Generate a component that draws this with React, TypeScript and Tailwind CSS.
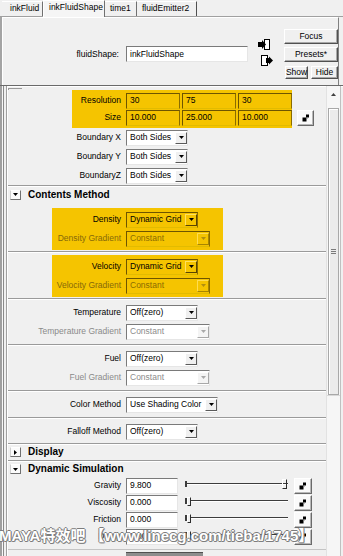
import React from "react";

type Tone = "white" | "yellow";

function Tri({ dir = "down", color = "#000" }: { dir?: "down" | "right" | "up"; color?: string }) {
  if (dir === "down")
    return (
      <svg width="5" height="3" viewBox="0 0 5 3">
        <polygon points="0,0 5,0 2.5,3" fill={color} />
      </svg>
    );
  if (dir === "up")
    return (
      <svg width="5" height="3" viewBox="0 0 5 3">
        <polygon points="0,3 5,3 2.5,0" fill={color} />
      </svg>
    );
  return (
    <svg width="3" height="5" viewBox="0 0 3 5">
      <polygon points="0,0 3,2.5 0,5" fill={color} />
    </svg>
  );
}

function Checker() {
  return (
    <svg width="8" height="8" viewBox="0 0 8 8">
      <rect x="4" y="0.5" width="3" height="3" fill="#000" />
      <rect x="0.5" y="3.5" width="4" height="4" fill="#000" />
      <rect x="4.5" y="4" width="1" height="1" fill="#888" />
    </svg>
  );
}

function MapBtn({ cls }: { cls: string }) {
  return (
    <div
      className={`${cls} shrink-0 flex items-center justify-center bg-[#fafafa] border border-t-white border-l-white border-b-[#6a6a6a] border-r-[#6a6a6a] shadow-[inset_-1px_-1px_0_#b8b8b8]`}
    >
      <Checker />
    </div>
  );
}

function NumField({ v, cls, tone = "white" }: { v: string; cls: string; tone?: Tone }) {
  const t =
    tone === "yellow"
      ? "bg-[#f5c400] border-t-[#6e5500] border-l-[#6e5500] border-b-[#e2bb00] border-r-[#8a6c00]"
      : "bg-white border-t-[#7a7a7a] border-l-[#7a7a7a] border-b-[#e6e6e6] border-r-[#e6e6e6]";
  return (
    <div className={`${cls} shrink-0 h-[16px] flex items-center pl-[3px] border ${t} whitespace-nowrap overflow-hidden`}>
      {v}
    </div>
  );
}

function Drop({
  text,
  cls,
  tone = "white",
  disabled = false,
}: {
  text: string;
  cls: string;
  tone?: Tone;
  disabled?: boolean;
}) {
  const wrap =
    tone === "yellow"
      ? "bg-[#f5c400] border-t-[#6e5500] border-l-[#6e5500] border-b-[#e2bb00] border-r-[#8a6c00]"
      : "bg-white border-t-[#7a7a7a] border-l-[#7a7a7a] border-b-[#e6e6e6] border-r-[#e6e6e6]";
  const btn =
    tone === "yellow"
      ? disabled
        ? "bg-[#f5c400] border-t-[#ffdc50] border-l-[#ffdc50] border-b-[#a88600] border-r-[#a88600]"
        : "bg-[#f5c400] border-t-[#ffe060] border-l-[#ffe060] border-b-[#5a4500] border-r-[#5a4500]"
      : disabled
      ? "bg-[#f4f4f4] border-t-white border-l-white border-b-[#a8a8a8] border-r-[#a8a8a8]"
      : "bg-[#f0f0f0] border-t-white border-l-white border-b-[#5a5a5a] border-r-[#5a5a5a]";
  const txt = disabled ? (tone === "yellow" ? "text-[#8a6c00]" : "text-[#8c8c8c]") : "text-black";
  const triColor = disabled ? (tone === "yellow" ? "#b08e10" : "#a8a8a8") : "#000";
  return (
    <div className={`${cls} shrink-0 h-[16px] flex items-center border ${wrap}`}>
      <div className={`flex-1 pl-[3px] whitespace-nowrap overflow-hidden ${txt}`}>{text}</div>
      <div className={`w-[12px] h-[12px] shrink-0 flex items-center justify-center border ${btn}`}>
        <Tri color={triColor} />
      </div>
    </div>
  );
}

function Row({
  label,
  labelCls,
  h = "h-[19px]",
  muted,
  children,
}: {
  label: string;
  labelCls: string;
  h?: string;
  muted?: string;
  children: React.ReactNode;
}) {
  return (
    <div className={`${h} flex items-center gap-[5px]`}>
      <div className={`${labelCls} shrink-0 text-right whitespace-nowrap ${muted ?? "text-black"}`}>{label}</div>
      {children}
    </div>
  );
}

function Header({ title, open, h = "h-[17px]" }: { title: string; open: boolean; h?: string }) {
  return (
    <div className={`${h} flex items-center border-t border-[#9a9a9a] shadow-[inset_0_1px_0_#ffffff]`}>
      <div className="ml-[2px] w-[11px] h-[10px] flex items-center justify-center bg-[#fbfbfb] border border-t-white border-l-[#d0d0d0] border-b-[#707070] border-r-[#707070]">
        <Tri dir={open ? "down" : "right"} />
      </div>
      <div className="ml-[7px] font-bold text-[10px] text-black">{title}</div>
    </div>
  );
}

function Slider({ pos }: { pos: "left" | "right" }) {
  return (
    <div className="relative shrink-0 w-[103px] h-[14px] ml-[2px]">
      <div className="absolute left-0 right-0 top-[4px] h-[2px] border-t border-[#3c3c3c] border-b border-b-white" />
      <div className="absolute left-0 top-[2px] w-[2px] h-[6px] bg-[#3c3c3c]" />
      {pos === "right" ? (
        <div className="absolute right-[1px] top-[0px] w-[5px] h-[10px] border-r border-b border-[#2c2c2c] border-l border-l-white border-t border-t-white" />
      ) : (
        <div className="absolute left-[2px] top-[1px] w-[4px] h-[9px] bg-[#f0f0f0] border-r border-b border-[#2c2c2c] border-l border-l-white border-t border-t-white" />
      )}
    </div>
  );
}

function IconIn() {
  return (
    <svg width="13" height="11" viewBox="0 0 13 11">
      <rect x="6.5" y="0.5" width="5" height="10" fill="#fff" stroke="#000" />
      <rect x="0" y="3" width="4" height="5" fill="#000" />
      <polygon points="4,1 8,5.5 4,10" fill="#000" />
    </svg>
  );
}

function IconOut() {
  return (
    <svg width="13" height="11" viewBox="0 0 13 11">
      <rect x="0.5" y="0.5" width="6" height="10" fill="#fff" stroke="#000" />
      <rect x="5" y="3" width="3" height="5" fill="#000" />
      <polygon points="8,1.5 12,5.5 8,9.5" fill="#000" />
    </svg>
  );
}

const raised =
  "flex items-center justify-center bg-[#f0f0f0] border border-t-white border-l-white border-b-[#505050] border-r-[#505050] shadow-[inset_-1px_-1px_0_#a8a8a8]";

function TabBar() {
  return (
    <div className="h-[17px] flex items-end pl-[2px] border-b border-[#a0a0a0] relative">
      <div className="h-[15px] w-[41px] pl-[8px] pb-[1px] flex items-center border-r border-[#707070] border-t border-t-white">
        inkFluid
      </div>
      <div className="h-[17px] w-[62px] pl-[5px] pb-[3px] flex items-center bg-[#f5f5f5] border-l border-l-white border-t border-t-white border-r border-[#707070] -mb-[1px] relative z-10">
        inkFluidShape
      </div>
      <div className="h-[15px] w-[32px] pl-[5px] pb-[1px] flex items-center border-r border-[#707070] border-t border-t-white">
        time1
      </div>
      <div className="h-[15px] w-[60px] pl-[5px] pb-[1px] flex items-center border-r border-[#505050] border-t border-t-white">
        fluidEmitter2
      </div>
    </div>
  );
}

function TopPanel() {
  return (
    <div className="h-[69px] flex border-b border-[#6a6a6a] shadow-[0_1px_0_#ffffff]">
      <div className="w-[3px] flex">
        <div className="w-[2px] bg-[#a4a4a4]" />
        <div className="w-[1px] bg-white" />
      </div>
      <div className="flex-1 flex items-start border-r border-[#808080] mr-[4px] border-t border-t-white">
        <div className="mt-[28px] flex items-center gap-[7px]">
          <div className="w-[116px] text-right">fluidShape:</div>
          <div className="w-[122px] h-[16px] flex items-center pl-[3px] bg-white border border-t-[#7a7a7a] border-l-[#7a7a7a] border-b-[#e6e6e6] border-r-[#e6e6e6]">
            inkFluidShape
          </div>
        </div>
        <div className="ml-[10px] mt-[21px] flex flex-col gap-[5px]">
          <IconIn />
          <div className="ml-[3px]">
            <IconOut />
          </div>
        </div>
        <div className="ml-[10px] mt-[11px] flex flex-col">
          <div className={`${raised} w-[54px] h-[15px]`}>Focus</div>
          <div className={`${raised} w-[54px] h-[15px] mt-[3px]`}>Presets*</div>
          <div className="flex mt-[4px] gap-[3px] ml-[1px]">
            <div className={`${raised} w-[23px] h-[13px]`}>Show</div>
            <div className={`${raised} w-[27px] h-[13px]`}>Hide</div>
          </div>
        </div>
      </div>
    </div>
  );
}

function LeftFrame() {
  return (
    <div className="w-[8px] shrink-0 flex">
      <div className="w-[2px] bg-[#a0a0a0]" />
      <div className="w-[1px] bg-[#f8f8f8]" />
      <div className="w-[1px] bg-[#8a8a8a]" />
      <div className="w-[2px] bg-[#f0f0f0]" />
      <div className="w-[1px] bg-[#a0a0a0]" />
      <div className="w-[1px] bg-white" />
    </div>
  );
}

function Scrollbar() {
  return (
    <div className="w-[14px] shrink-0 flex flex-col bg-[#f6f6f6] border-l border-[#e2e2e2]">
      <div className="h-[16px] shrink-0 flex items-center justify-center">
        <Tri dir="up" color="#404040" />
      </div>
      <div className="h-[6px] shrink-0" />
      <div className="h-[287px] shrink-0 mx-[1px] flex items-center justify-center bg-[#ebebeb] border border-[#a8a8a8] shadow-[inset_1px_1px_0_#ffffff]">
        <div className="flex flex-col gap-[1px]">
          <div className="w-[5px] h-[1px] bg-[#7a7a7a]" />
          <div className="w-[5px] h-[1px] bg-[#7a7a7a]" />
          <div className="w-[5px] h-[1px] bg-[#7a7a7a]" />
        </div>
      </div>
      <div className="flex-1 border-t border-[#d8d8d8]" />
    </div>
  );
}

const grp = "border-b border-[#9a9a9a] shadow-[0_1px_0_#ffffff]";
const yellowLabelMuted = "text-[#86690a]";
const grayMuted = "text-[#8a8a8a]";

function Content() {
  return (
    <div className="w-[318px] shrink-0 overflow-hidden">
      {/* remnant of previous section */}
      <div className="h-[4px] pt-[2px]">
        <div className="w-[14px] h-[2px] border-t border-l border-[#9a9a9a]" />
      </div>

      {/* Resolution / Size */}
      <div className="h-[38px] flex items-end">
        <div className="ml-[64px] w-[220px] py-[2px] bg-[#f5c400]">
          <Row label="Resolution" labelCls="w-[49px]" h="h-[17px]">
            <div className="flex gap-[2px]">
              <NumField v="30" cls="w-[54px]" tone="yellow" />
              <NumField v="75" cls="w-[54px]" tone="yellow" />
              <NumField v="30" cls="w-[54px]" tone="yellow" />
            </div>
          </Row>
          <Row label="Size" labelCls="w-[49px]" h="h-[17px]">
            <div className="flex gap-[2px]">
              <NumField v="10.000" cls="w-[54px]" tone="yellow" />
              <NumField v="25.000" cls="w-[54px]" tone="yellow" />
              <NumField v="10.000" cls="w-[54px]" tone="yellow" />
            </div>
          </Row>
        </div>
        <div className="ml-[5px] mb-[2px]">
          <MapBtn cls="w-[17px] h-[16px]" />
        </div>
      </div>

      <Row label="Boundary X" labelCls="w-[113px]">
        <Drop text="Both Sides" cls="w-[62px]" />
      </Row>
      <Row label="Boundary Y" labelCls="w-[113px]">
        <Drop text="Both Sides" cls="w-[62px]" />
      </Row>
      <Row label="BoundaryZ" labelCls="w-[113px]">
        <Drop text="Both Sides" cls="w-[62px]" />
      </Row>

      <Header title="Contents Method" open h="h-[18px]" />

      {/* Density */}
      <div className={`pt-[5px] pb-[1px] ${grp}`}>
        <div className="ml-[44px] w-[171px] py-[2px] bg-[#f5c400]">
          <Row label="Density" labelCls="w-[69px]">
            <Drop text="Dynamic Grid" cls="w-[72px]" tone="yellow" />
          </Row>
          <Row label="Density Gradient" labelCls="w-[69px]" muted={yellowLabelMuted}>
            <Drop text="Constant" cls="w-[84px]" tone="yellow" disabled />
          </Row>
        </div>
      </div>

      {/* Velocity */}
      <div className={`pt-[3px] pb-[1px] ${grp}`}>
        <div className="ml-[44px] w-[171px] py-[2px] bg-[#f5c400]">
          <Row label="Velocity" labelCls="w-[69px]">
            <Drop text="Dynamic Grid" cls="w-[72px]" tone="yellow" />
          </Row>
          <Row label="Velocity Gradient" labelCls="w-[69px]" muted={yellowLabelMuted}>
            <Drop text="Constant" cls="w-[84px]" tone="yellow" disabled />
          </Row>
        </div>
      </div>

      {/* Temperature */}
      <div className={`pt-[4px] pb-[3px] ${grp}`}>
        <Row label="Temperature" labelCls="w-[113px]">
          <Drop text="Off(zero)" cls="w-[72px]" />
        </Row>
        <Row label="Temperature Gradient" labelCls="w-[113px]" muted={grayMuted}>
          <Drop text="Constant" cls="w-[84px]" disabled />
        </Row>
      </div>

      {/* Fuel */}
      <div className={`pt-[4px] pb-[3px] ${grp}`}>
        <Row label="Fuel" labelCls="w-[113px]">
          <Drop text="Off(zero)" cls="w-[72px]" />
        </Row>
        <Row label="Fuel Gradient" labelCls="w-[113px]" muted={grayMuted}>
          <Drop text="Constant" cls="w-[84px]" disabled />
        </Row>
      </div>

      {/* Color Method */}
      <div className={`pt-[4px] pb-[3px] ${grp}`}>
        <Row label="Color Method" labelCls="w-[113px]">
          <Drop text="Use Shading Color" cls="w-[92px]" />
        </Row>
      </div>

      {/* Falloff */}
      <div className="pt-[4px] pb-[2px]">
        <Row label="Falloff Method" labelCls="w-[113px]">
          <Drop text="Off(zero)" cls="w-[72px]" />
        </Row>
      </div>

      <Header title="Display" open={false} />
      <Header title="Dynamic Simulation" open />

      {[
        { l: "Gravity", v: "9.800", p: "right" as const },
        { l: "Viscosity", v: "0.000", p: "left" as const },
        { l: "Friction", v: "0.000", p: "left" as const },
        { l: "Damp", v: "0.000", p: "left" as const },
      ].map((r) => (
        <Row key={r.l} label={r.l} labelCls="w-[113px]" h="h-[17px]">
          <NumField v={r.v} cls="w-[52px]" />
          <Slider pos={r.p} />
          <MapBtn cls="w-[18px] h-[16px] ml-[1px]" />
        </Row>
      ))}

      <div className="h-[5px] border-b border-[#c4c4c4]" />
      <div className="ml-[118px] mt-[2px] w-[77px] h-[10px] bg-[#8e8e8e] border-t border-[#505050]" />
    </div>
  );
}

export default function App() {
  return (
    <div className="w-[343px] h-[556px] overflow-hidden bg-[#f0f0f0] relative font-['Liberation_Sans',Arial,sans-serif] text-[8.5px] text-black leading-none select-none">
      <TabBar />
      <TopPanel />
      <div className="flex h-[470px]">
        <LeftFrame />
        <Content />
        <Scrollbar />
        <div className="w-[3px] shrink-0 border-l border-[#c0c0c0]" />
      </div>
      <div className="absolute left-[-1px] top-[528px] whitespace-nowrap text-[15px] font-bold text-white font-['Liberation_Sans','Noto_Sans_CJK_SC',sans-serif] [text-shadow:1px_0_#7c7c7c,-1px_0_#7c7c7c,0_1px_#7c7c7c,0_-1px_#7c7c7c,1px_1px_#9a9a9a]">
        MAYA特效吧 【www.linecg.com/tieba/1745】
      </div>
    </div>
  );
}
